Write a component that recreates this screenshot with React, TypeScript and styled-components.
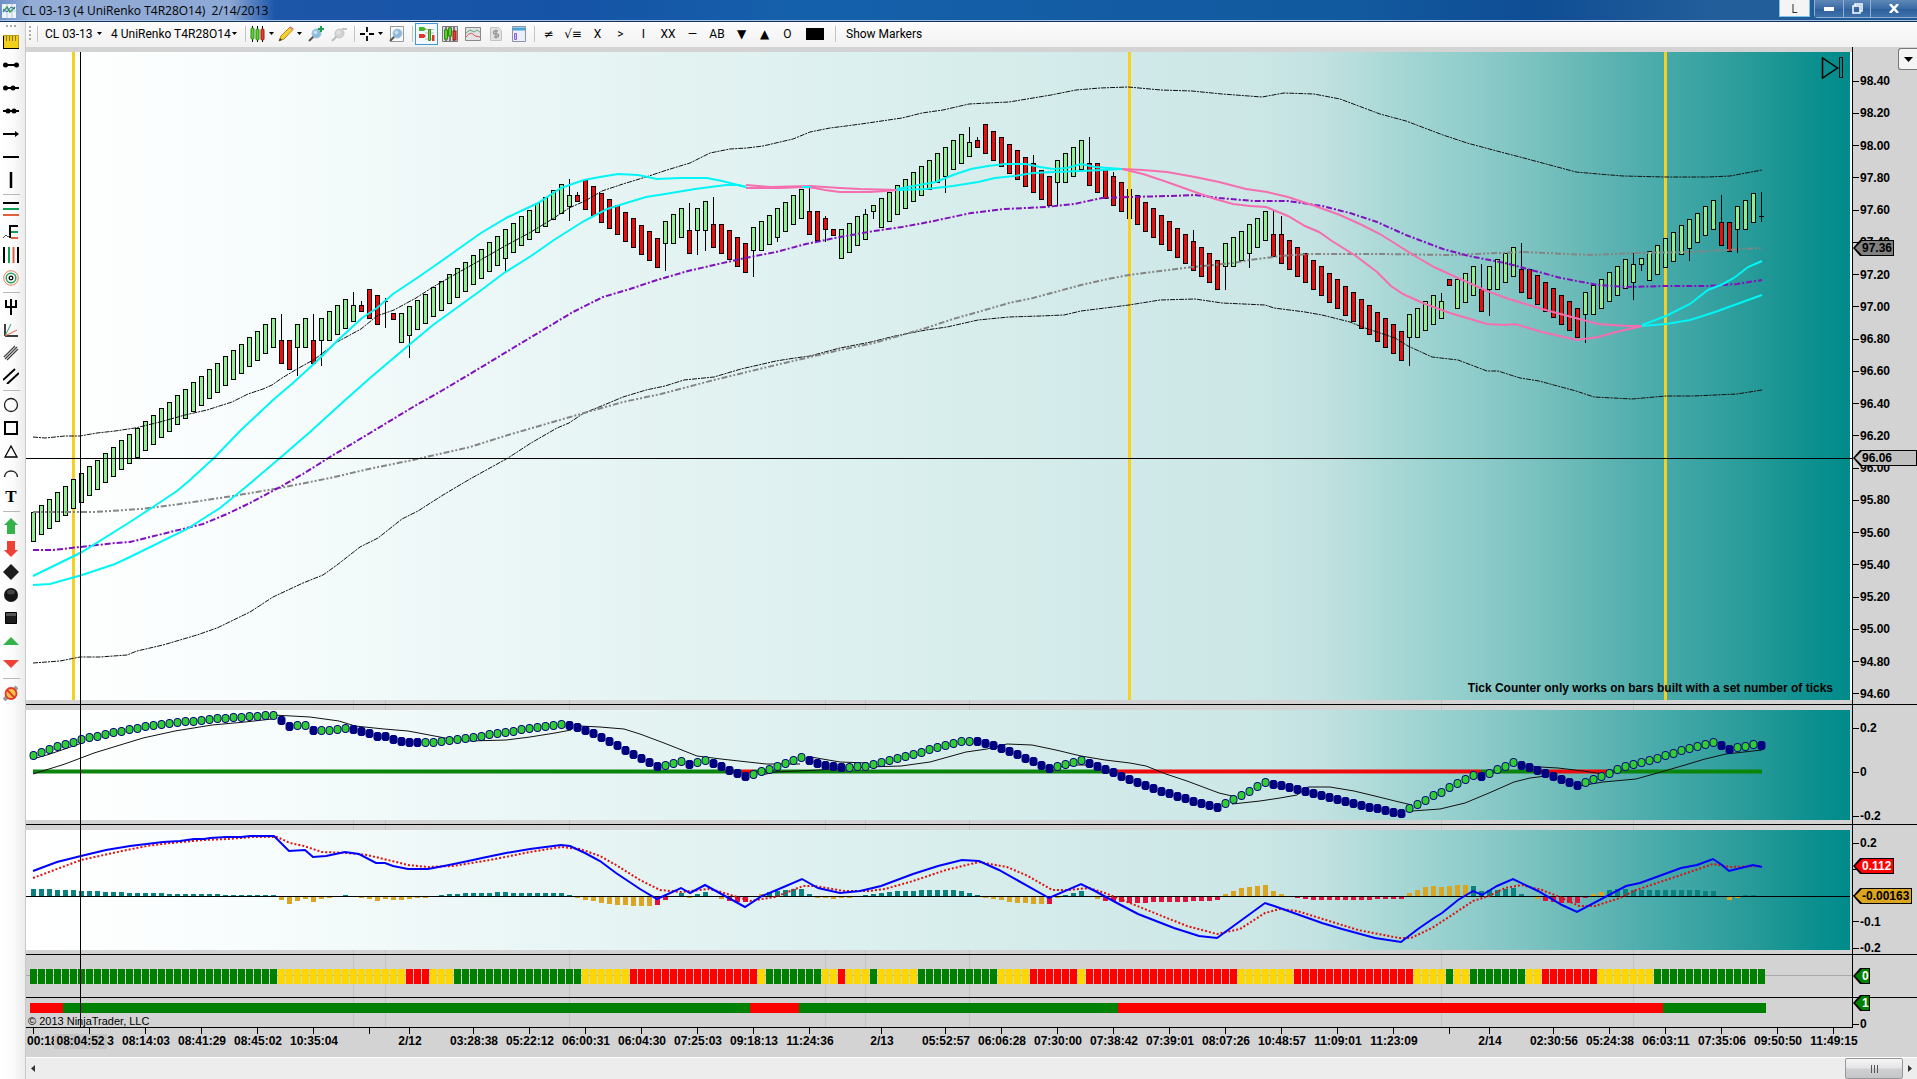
import React from "react";
import styled, { createGlobalStyle } from "styled-components";

/* ------------------------------------------------------------------ */
/* Theme                                                               */
/* ------------------------------------------------------------------ */

const UI_FONT = `"Open Sans", "Noto Sans", sans-serif`;
const TOOLBAR_FONT = `Roboto, "Open Sans", sans-serif`;
const CHART_FONT = `"Liberation Sans", Arial, sans-serif`;
const GREY = "#d3d3d3";
const PLOT_FILL = `linear-gradient(90deg, #ffffff 0%, #fbfefe 8%, #eff8f8 22%, #e5f4f3 33%, #dcf0ef 45%, #d3ebea 57%,
  #cce7e6 67%, #c2e2e1 71%, #aedad8 74%, #96d0ce 78%, #7fc4c2 82%, #62b6b4 86%, #45a9a9 90%, #289b99 94.5%, #0f9190 97.5%, #008b8b 100%)`;

const GlobalStyle = createGlobalStyle`
  *, *::before, *::after { box-sizing: border-box; }
  html, body, #root { height: 100%; margin: 0; }
  body { overflow: hidden; background: ${GREY}; color: #000; font-family: ${UI_FONT}; font-size: 12px; }
  button, select { font: inherit; color: inherit; border: 0; margin: 0; padding: 0; background: none; }
  svg { display: block; }
`;

/* ------------------------------------------------------------------ */
/* Chart data                                                          */
/* ------------------------------------------------------------------ */

const BAR = 8;
const FIRST = 33;
const STEP = 6.46;
const BODY = 29;
const barX = (i: number) => FIRST + i * BAR;

type Candle = { up: boolean; top: number; bottom: number; high?: number; low?: number };
const candles: Candle[] = [];
const u = (top: number, bottom: number, high?: number, low?: number) => candles.push({ up: true, top, bottom, high, low });
const d = (top: number, bottom: number, high?: number, low?: number) => candles.push({ up: false, top, bottom, high, low });
const rise = (n: number, top: number) => {
  for (let k = 0; k < n; k++) u(top - k * STEP, top - k * STEP + BODY);
};
const fall = (n: number, top: number) => {
  for (let k = 0; k < n; k++) d(top + k * STEP, top + k * STEP + BODY);
};

rise(31, 511.5);
d(340, 363, 314);
d(340, 369);
u(324, 347, undefined, 376);
u(318, 347);
d(340, 363, 314);
u(318, 340, undefined, 366);
u(311, 340);
rise(2, 305);
u(305, 321, 292);
d(305, 311, 301);
fall(2, 289);
u(301, 301, 298, 328);
d(313, 319);
u(313, 342);
u(306, 335, undefined, 358);
rise(19, 300.3);
candles[59].low = 271;
u(195, 206, 179, 221);
d(195, 201, 192);
fall(10, 179.6);
u(221, 243, undefined, 271);
u(214, 243);
u(208, 237);
d(230, 253, 203);
u(208, 230, undefined, 255);
u(201, 230, undefined, 251);
d(224, 247, 197);
fall(4, 224);
u(227, 250, undefined, 277);
u(221, 250);
rise(5, 214.5);
candles[93].low = 242;
d(211, 234, 185);
d(211, 240);
d(218, 229, 216, 242);
d(229, 235);
rise(3, 229);
u(214, 239, 209);
u(205, 211, undefined, 219);
rise(11, 198.3);
candles[114].low = 193;
u(142, 156, 127);
d(140, 147, 137);
fall(9, 124.3);
candles[125].high = 155;
u(160, 182, undefined, 206);
u(153, 182);
u(147, 176);
u(140, 169);
d(163, 185, 137);
fall(16, 163);
candles[135].high = 172;
candles[145].high = 230;
u(243, 266, undefined, 290);
rise(5, 237);
candles[152].low = 268;
d(234, 256, 209);
fall(16, 234);
candles[156].high = 216;
u(314, 337, undefined, 366);
u(308, 337);
u(301, 330);
u(295, 324);
u(301, 318, 293);
d(279, 285);
rise(3, 279);
d(289, 311, 264);
u(266, 289, undefined, 316);
u(259, 289);
u(253, 282);
u(247, 276);
d(269, 292, 243);
fall(7, 269);
u(292, 314, undefined, 343);
rise(5, 285.3);
u(264, 282, 253, 300);
u(258, 264, undefined, 271);
rise(9, 251.3);
candles[207].low = 261;
d(222, 245, 195);
d(222, 251);
u(206, 229, undefined, 253);
u(200, 229);
u(193, 222);
u(216, 216, 192, 222);

const upperBand =
  "33,437 45,438 65,436 80,436 97,433 115,431 135,428 160,422 185,415 207,410 232,402 248,394 263,389 272,385 282,378 297,369 315,359 337,342 361,329 377,316 394,310 416,298 433,287 454,275 477,262 505,246 531,232 554,218 569,208 585,201 602,191 623,184 646,177 667,170 690,163 710,153 730,149 747,148 763,146 793,139 810,132 830,128 846,126 861,124 902,118 922,113 943,110 969,104 988,103 1009,102 1051,95 1076,90 1100,88 1128,87 1161,90 1192,91 1222,94 1262,97 1284,93 1314,94 1340,99 1380,114 1406,121 1443,135 1467,143 1493,150 1520,157 1576,172 1598,174 1623,176 1666,177 1708,177 1730,176 1762,170";
const lowerBand =
  "33,663 60,661 80,657 100,657 127,655 137,651 163,645 180,640 197,635 217,628 250,612 273,597 303,583 323,575 337,565 360,547 378,538 402,519 418,511 443,495 470,479 508,458 531,443 557,428 569,423 584,413 604,405 623,397 646,390 665,386 684,380 714,377 741,369 776,361 795,358 810,356 840,348 871,342 895,336 926,330 947,327 978,320 1009,317 1040,316 1064,315 1081,311 1105,308 1129,305 1160,300 1195,299 1222,303 1265,305 1274,308 1305,312 1322,315 1350,322 1362,327 1395,338 1408,346 1432,357 1458,360 1487,371 1498,371 1520,378 1539,381 1576,391 1594,397 1632,399 1666,396 1693,396 1737,394 1762,390";
const purpleLine =
  "33,550 53,550 80,547 115,543 130,542 150,537 203,524 227,514 250,503 280,487 303,474 330,457 370,433 413,407 443,390 480,368 508,351 538,333 573,312 603,297 630,289 657,280 688,271 714,265 745,258 776,252 806,244 840,237 874,231 902,227 929,222 971,213 1005,209 1046,207 1074,204 1102,198 1129,197 1170,196 1195,195 1219,198 1253,201 1288,201 1322,206 1350,213 1377,222 1406,235 1443,249 1469,256 1505,263 1524,268 1561,278 1598,285 1627,287 1666,286 1708,286 1737,284 1762,280";
const greyLine =
  "33,512 95,512 140,509 180,504 233,496 280,488 330,478 373,468 413,460 470,447 508,435 546,424 584,413 623,402 661,394 714,380 776,365 840,350 874,343 902,335 926,328 953,319 978,312 1009,303 1033,298 1081,285 1108,279 1129,275 1160,271 1193,267 1233,263 1250,260 1281,256 1308,254 1380,254 1450,255 1524,252 1590,255 1634,253 1690,252 1727,250 1762,248";

const CYAN = "#00f5f5";
const PINK = "#f56eaf";
const trendLines: { colour: string; points: string }[] = [
  { colour: CYAN, points: "33,576 82,552 130,522 153,507 177,491 190,480 215,457 240,431 273,400 293,383 317,361 337,341 362,318 377,308 393,294 417,278 433,267 457,250 481,233 508,217 538,203 561,188 584,180 600,177 618,174 638,175 657,179 680,178 707,178 722,181 746,187" },
  { colour: CYAN, points: "33,585 50,584 82,575 115,564 130,557 187,529 220,508 247,486 280,458 310,432 343,402 370,378 409,345 433,325 480,291 504,273 531,256 554,240 584,221 607,209 623,204 646,197 665,194 695,189 726,185 738,185 746,187" },
  { colour: PINK, points: "746,185 770,187 810,186 825,187 840,188 860,189 897,190" },
  { colour: PINK, points: "746,188 780,188 803,187 815,188 825,190 840,192 870,192 885,191 897,190" },
  { colour: CYAN, points: "802,187 811,187" },
  { colour: CYAN, points: "897,189 919,185 936,182 953,175 971,169 988,166 1005,164 1026,164 1040,167 1053,169 1067,168 1081,164 1095,167 1122,169" },
  { colour: CYAN, points: "897,190 926,189 953,186 978,182 995,178 1015,176 1033,173 1053,172 1081,171 1102,170 1122,169" },
  { colour: PINK, points: "1122,169 1143,170 1167,172 1195,177 1219,182 1246,189 1267,192 1288,197 1315,206 1340,215 1362,225 1380,234 1399,246 1415,256 1434,267 1458,278 1487,291 1509,299 1542,309 1568,316 1598,324 1627,326 1642,326" },
  { colour: PINK, points: "1122,169 1143,174 1167,182 1195,192 1215,199 1233,204 1250,206 1266,207 1288,216 1305,226 1319,232 1332,241 1356,256 1377,272 1391,286 1403,294 1425,304 1450,313 1487,324 1505,325 1515,324 1542,332 1577,340 1598,337 1616,332 1642,326" },
  { colour: CYAN, points: "1642,325 1666,316 1690,304 1708,290 1723,284 1734,278 1748,267 1762,261" },
  { colour: CYAN, points: "1642,326 1666,324 1690,320 1715,312 1737,304 1762,295" },
];

/* Momentum dots: height of each bar's dot, in thirds of a pixel from the panel's origin. */
const momentum = [
  195, 187, 178, 169, 163, 157, 147, 141, 138, 131, 126, 123, 118, 114, 108, 105, 102, 99, 96, 94, 93, 90, 88, 85, 84, 80, 80, 78, 77, 75, 75,
  90, 108, 105, 104, 120, 120, 120, 118, 114, 117, 123, 129, 137, 138, 147, 153, 155, 156, 156, 156, 153, 150, 147, 144, 142, 138, 133, 130, 126,
  123, 117, 114, 111, 108, 104, 102, 105, 110, 119, 129, 141, 153, 165, 181, 192, 204, 216, 229, 225, 218, 213, 222, 216, 210, 219, 228, 240, 249,
  259, 252, 243, 237, 228, 219, 210, 201, 210, 218, 225, 228, 231, 231, 228, 228, 222, 216, 210, 204, 198, 192, 186, 178, 171, 165, 160, 153, 153,
  154, 159, 165, 174, 183, 192, 204, 213, 226, 234, 228, 222, 216, 210, 219, 228, 237, 246, 258, 267, 276, 285, 294, 303, 309, 318, 323, 333, 339,
  345, 351, 339, 327, 315, 303, 288, 275, 282, 285, 291, 297, 303, 309, 315, 321, 327, 333, 339, 345, 351, 354, 360, 366, 369, 355, 342, 330, 315,
  306, 291, 279, 267, 255, 258, 249, 237, 228, 216, 225, 231, 240, 249, 258, 268, 276, 285, 276, 268, 258, 249, 237, 228, 222, 216, 210, 204, 195,
  189, 180, 174, 168, 162, 156, 165, 177, 171, 168, 162, 165,
];

const momentumCurves = [
  "33,759 50,754 82,743",
  "33,774 65,764 94,753 143,738 175,731 212,725 245,722 272,719",
  "273,715 310,717 339,721 355,726 384,729 408,731 424,734 445,738 470,741 506,740 530,737 555,733 571,730",
  "580,726 600,727 624,729 640,734 664,743 697,756 721,759 766,764 800,764",
  "762,775 775,772 819,770 844,768 868,767 901,766 930,762 966,752 987,749 1007,744 1032,745 1056,750 1081,756 1105,760 1130,763 1146,766 1166,774 1187,781 1203,787 1219,793 1232,796",
  "811,757 840,762 868,763",
  "1050,768 1073,765 1090,765",
  "1232,804 1260,801 1280,798 1297,795 1308,787 1330,787 1354,791 1379,797 1395,801 1412,805",
  "1412,811 1440,809 1465,803 1489,793 1514,782 1530,778 1546,776",
  "1522,766 1558,768 1583,771 1603,774",
  "1579,786 1603,782 1636,779 1661,772 1685,765 1705,759 1726,754 1762,750",
];

const zeroSegments: [number, number, string][] = [
  [33, 742, "#0a840a"],
  [742, 754, "#ee0a0a"],
  [754, 1113, "#0a840a"],
  [1113, 1481, "#ee0a0a"],
  [1481, 1540, "#0a840a"],
  [1540, 1610, "#ee0a0a"],
  [1610, 1762, "#0a840a"],
];

const macdLine =
  "33,871 57,862 81,856 106,850 130,846 163,842 180,841 194,839 204,839 210,838 226,837 241,837 250,836 274,836 289,851 305,850 313,857 326,856 345,852 359,854 376,863 385,863 393,866 408,869 428,869 449,865 473,860 482,858 506,853 530,849 561,845 570,846 585,853 600,861 616,873 640,889 657,899 681,888 690,893 705,885 745,907 762,896 779,889 802,879 818,888 840,893 860,891 881,886 913,874 938,866 962,860 979,861 999,870 1049,898 1081,884 1095,891 1117,903 1138,914 1174,928 1199,936 1217,938 1265,903 1277,907 1322,923 1342,929 1375,938 1401,942 1418,929 1434,918 1442,913 1458,900 1473,891 1482,895 1497,886 1513,879 1538,891 1562,905 1577,912 1626,886 1640,883 1681,868 1697,865 1713,859 1722,865 1729,871 1753,865 1762,867";
const macdSignal =
  "33,878 81,860 122,851 147,846 171,843 204,840 228,839 253,837 277,837 290,843 304,846 322,852 347,853 367,855 388,860 408,865 428,867 453,866 490,860 530,852 561,847 580,849 600,856 616,865 640,880 660,890 681,892 709,889 721,892 750,901 775,897 803,886 815,886 844,891 868,891 885,889 913,881 946,870 979,862 1007,867 1028,876 1052,890 1068,890 1089,888 1105,893 1130,903 1162,916 1187,926 1217,934 1240,929 1265,913 1280,909 1297,911 1326,920 1358,930 1399,938 1411,938 1432,928 1452,915 1473,901 1489,896 1505,888 1522,885 1542,890 1562,898 1579,906 1595,906 1620,898 1636,890 1681,875 1713,864 1730,867 1762,866";

const histogram = [
  7, 7, 7, 6, 6, 6, 5, 5, 5, 4, 4, 4, 3, 3, 3, 3, 3, 2, 2, 2, 2, 2, 2, 2, 1, 1, 1, 1, 1, 1, 1, -3, -7, -4, -2, -5, -2, -1, 0, 1, 0, -1, -2, -4,
  -2, -3, -3, -2, -1, -1, 0, 1, 2, 2, 3, 3, 3, 3, 4, 4, 3, 3, 3, 3, 3, 3, 3, 1, -1, -3, -4, -6, -7, -8, -8, -9, -9, -9, -8, -3, 0, 3, -1, 2, 4,
  0, -2, -4, -5, -5, 0, 2, 4, 5, 6, 7, 7, 2, -1, -1, -2, -1, -1, 0, 1, 2, 3, 4, 5, 5, 5, 6, 6, 6, 6, 6, 5, 3, 1, -1, -2, -3, -5, -6, -6, -7, -7,
  -7, -1, 1, 3, 5, 0, -2, -4, -4, -5, -6, -6, -6, -5, -5, -5, -5, -5, -4, -4, -4, -3, 2, 5, 8, 9, 10, 11, 5, 2, 0, -1, -2, -3, -3, -3, -3, -3, -3,
  -3, -3, -2, -2, -2, -2, 3, 6, 9, 10, 9, 10, 11, 11, 10, 5, 6, 6, 7, 8, 2, 0, -2, -4, -5, -6, -6, -6, -1, 2, 4, 6, 7, 7, 6, 6, 6, 6, 6, 6, 6, 6,
  6, 5, 5, 0, -3, -1, 1, 1, 0,
];
const belowZero = [[78, 79], [87, 91], [127, 127], [134, 179], [189, 196]];

const GREEN = "#008000";
const RED = "#ff0000";
const GOLD = "#ffd700";
const signalRuns: [number, string][] = [
  [31, GREEN], [16, GOLD], [3, RED], [3, GOLD], [16, GREEN], [6, GOLD], [16, RED], [1, GOLD], [7, GREEN], [2, GOLD], [1, RED], [3, GOLD],
  [1, GREEN], [5, GOLD], [10, GREEN], [4, GOLD], [6, RED], [1, GOLD], [19, RED], [7, GOLD], [15, RED], [4, GOLD], [1, GREEN], [2, GOLD],
  [7, GREEN], [2, GOLD], [7, RED], [7, GOLD], [14, GREEN],
];
const signalBlocks = signalRuns.flatMap(([n, colour]) => Array<string>(n).fill(colour));

const trendRuns: [number, number, string][] = [
  [30, 63, RED],
  [63, 750, GREEN],
  [750, 799, RED],
  [799, 1118, GREEN],
  [1118, 1663, RED],
  [1663, 1766, GREEN],
];

const sessionLines = [353, 385, 569, 825, 865, 969, 1441, 1633];
const dayMarkers = [72, 1664];

const priceLabels = Array.from({ length: 20 }, (_, k) => (98.4 - k * 0.2).toFixed(2));

/* Each tick: number of bars to the next one, and its label. */
const timeTicks: [number, string][] = [
  [7, "00:18:24"], [7, "08:10:43"], [7, "08:14:03"], [7, "08:41:29"], [7, "08:45:02"], [7, "10:35:04"], [5, ""], [8, "2/12"],
  [7, "03:28:38"], [7, "05:22:12"], [7, "06:00:31"], [7, "06:04:30"], [7, "07:25:03"], [7, "09:18:13"], [9, "11:24:36"], [8, "2/13"],
  [7, "05:52:57"], [7, "06:06:28"], [7, "07:30:00"], [7, "07:38:42"], [7, "07:39:01"], [7, "08:07:26"], [7, "10:48:57"], [7, "11:09:01"],
  [7, "11:23:09"], [5, ""], [8, "2/14"], [7, "02:30:56"], [7, "05:24:38"], [7, "06:03:11"], [7, "07:35:06"], [7, "09:50:50"], [0, "11:49:15"],
];

/* ------------------------------------------------------------------ */
/* Window frame                                                        */
/* ------------------------------------------------------------------ */

const Window = styled.div`
  display: flex;
  flex-direction: column;
  height: 100vh;
`;

const TitleBar = styled.header`
  display: flex;
  align-items: flex-start;
  flex: 0 0 22px;
  border-bottom: 1px solid #16305c;
  box-shadow: inset 0 -1px #a9c3e4;
  background: linear-gradient(90deg, #6d90c8 0, #94add6 30px, #8ca8d4 230px, #1c56a9 275px, #1553a6 560px, #1560ab 800px, #125a9f 70%, #0f4d94 80%, #235f9b 90%, #1f5a98 100%);
`;

const TitleText = styled.h1`
  display: flex;
  align-items: center;
  gap: 6px;
  flex: 1;
  height: 21px;
  margin: 0;
  padding-left: 2px;
  font-size: 12px;
  font-weight: 400;
  white-space: pre;
`;

const LinkButton = styled.button`
  width: 31px;
  height: 17px;
  margin-right: 4px;
  border: 1px solid #7fc4e8;
  border-top: 0;
  background: #f4f4f4;
  color: #333;
`;

const Caption = styled.div`
  display: flex;
  height: 18px;
  border: 1px solid #8fb0d2;
  border-width: 0 0 1px 1px;
  border-radius: 0 0 0 4px;
`;

const CaptionButton = styled.button<{ $w: number }>`
  display: grid;
  place-items: center;
  width: ${(p) => p.$w}px;
  background: linear-gradient(#5f88b8, #3a6ba4 50%, #2d5f9c 51%, #3f72aa);
  & + & {
    border-left: 1px solid #8fb0d2;
  }
`;

const Body = styled.div`
  display: flex;
  flex: 1;
  min-height: 0;
`;

/* ------------------------------------------------------------------ */
/* Drawing tools                                                       */
/* ------------------------------------------------------------------ */

const Rail = styled.nav`
  display: flex;
  flex-direction: column;
  align-items: center;
  flex: 0 0 26px;
  padding-right: 3px;
  border-right: 1px solid #c9c9c9;
  background: linear-gradient(90deg, #fff 0, #fbfbfb 50%, #ececec 100%);
`;

const RailGrip = styled.span`
  width: 12px;
  height: 8px;
  background: radial-gradient(circle, #aaa 1px, transparent 1px) 0 2px / 4px 4px repeat-x;
`;

const RailButton = styled.button`
  display: grid;
  place-items: center;
  flex: 0 0 23px;
  width: 22px;
`;

const RailRule = styled.hr`
  width: 17px;
  height: 1px;
  margin: 3px 0 2px;
  border: 0;
  background: #b8b8b8;
`;

/* ------------------------------------------------------------------ */
/* Toolbar                                                             */
/* ------------------------------------------------------------------ */

const Main = styled.main`
  display: flex;
  flex-direction: column;
  flex: 1;
  min-width: 0;
`;

const Toolbar = styled.div`
  display: flex;
  align-items: center;
  flex: 0 0 25px;
  padding: 0 0 2px 2px;
  background: linear-gradient(#fdfdfd, #f1f1f1);
  font-family: ${TOOLBAR_FONT};
`;

const Grip = styled.span`
  width: 3px;
  height: 17px;
  margin-right: 2px;
  background: radial-gradient(circle, #aaa 1px, transparent 1px) 0 0 / 4px 4px repeat-y;
`;

const Divider = styled.span`
  width: 1px;
  height: 16px;
  margin: 0 2px 0 4px;
  background: #c4c4c4;
`;

const Picker = styled.label<{ $w: number }>`
  display: flex;
  align-items: center;
  width: ${(p) => p.$w}px;
  padding: 0 4px 0 5px;
`;

const PickerSelect = styled.select`
  flex: 1;
  min-width: 0;
  appearance: none;
  white-space: nowrap;
`;

const ToolButton = styled.button<{ $w?: number; $active?: boolean; $shape?: boolean }>`
  display: flex;
  align-items: center;
  justify-content: center;
  gap: 3px;
  width: ${(p) => p.$w ?? 23}px;
  height: 22px;
  white-space: nowrap;
  font-family: ${(p) => (p.$shape ? `"DejaVu Sans", sans-serif` : "inherit")};
  box-shadow: ${(p) => (p.$active ? "inset 0 0 0 1px #3f97d8" : "none")};
  background: ${(p) => (p.$active ? "#f3f8fc" : "none")};
`;

const Swatch = styled.span`
  width: 18px;
  height: 12px;
  background: #000;
`;

const MarkersButton = styled.button`
  height: 22px;
  padding: 0 8px;
`;

/* ------------------------------------------------------------------ */
/* Chart                                                               */
/* ------------------------------------------------------------------ */

const ChartArea = styled.section`
  position: relative;
  display: flex;
  flex-direction: column;
  flex: 1;
  min-height: 0;
  background: ${GREY};
  font-family: ${CHART_FONT};
  font-weight: 700;
  line-height: 12px;
`;

const SessionGrid = styled.svg`
  position: absolute;
  inset: 0;
  width: 100%;
  height: 100%;
`;

const Panel = styled.div<{ $h?: number; $rule?: boolean }>`
  position: relative;
  display: flex;
  flex: ${(p) => (p.$h ? `0 0 ${p.$h}px` : "1 1 0")};
  min-height: 0;
  border-bottom: ${(p) => (p.$rule === false ? 0 : 1)}px solid #000;
`;

const PlotBox = styled.div<{ $edge?: string }>`
  position: relative;
  flex: 1;
  min-width: 0;
  margin: 5px 0 4px;
  border-right: 2px solid ${(p) => p.$edge ?? GREY};
  background: ${PLOT_FILL};
`;

const StripBox = styled.div`
  position: relative;
  flex: 1;
  min-width: 0;
`;

const Plot = styled.svg`
  width: 100%;
  height: 100%;
`;

const Axis = styled.div<{ $top?: number; $bottom?: number }>`
  position: relative;
  display: flex;
  flex-direction: column;
  justify-content: space-between;
  flex: 0 0 65px;
  padding: ${(p) => p.$top ?? 0}px 0 ${(p) => p.$bottom ?? 0}px;
  border-left: 1px solid #000;
`;

const AxisLabel = styled.span`
  display: flex;
  align-items: center;
  gap: 1px;
  min-height: 12px;
  &::before {
    content: "";
    width: 6px;
    height: 1px;
    background: #000;
  }
`;

const Tag = styled.span<{ $y: number; $w: number; $fill: string; $ink?: string }>`
  position: absolute;
  top: ${(p) => p.$y}px;
  left: 0;
  width: ${(p) => p.$w}px;
  height: 16px;
  padding-left: 9px;
  line-height: 16px;
  color: ${(p) => p.$ink ?? "#000"};
  isolation: isolate;
  &::before,
  &::after {
    content: "";
    position: absolute;
    z-index: -2;
    inset: 0;
    background: #000;
    clip-path: polygon(0 50%, 7px 0, 100% 0, 100% 100%, 7px 100%);
  }
  &::after {
    z-index: -1;
    inset: 1px 1px 1px 2px;
    background: ${(p) => p.$fill};
  }
`;

const CrosshairX = styled.i`
  position: absolute;
  left: 54px;
  top: 5px;
  bottom: 30px;
  width: 1px;
  background: #000;
`;

const CrosshairY = styled.i`
  position: absolute;
  left: 0;
  right: 64px;
  top: 411px;
  height: 1px;
  background: #000;
`;

const Notice = styled.p`
  position: absolute;
  right: 17px;
  bottom: 6px;
  margin: 0;
`;

const LastBarButton = styled.button`
  position: absolute;
  top: 5px;
  right: 6px;
`;

const AxisMenu = styled.button`
  position: absolute;
  top: 1px;
  right: 0;
  display: grid;
  place-items: center;
  width: 19px;
  height: 22px;
  border: 1px solid #777;
  border-right: 0;
  border-radius: 3px 0 0 3px;
  background: #f5f5f5;
`;

const Copyright = styled.small`
  position: absolute;
  left: 2px;
  bottom: 0;
  font-size: 11px;
  font-weight: 400;
`;

const TimeAxis = styled.div`
  position: relative;
  display: flex;
  flex: 0 0 30px;
  margin-right: 64px;
  padding-left: 7px;
  border-top: 1px solid #000;
`;

const TimeTick = styled.span<{ $bars: number }>`
  display: flex;
  flex: 0 0 ${(p) => p.$bars * BAR}px;
  width: 0;
  height: 6px;
  border-left: 1px solid #000;
`;

const TimeLabel = styled.span<{ $start?: boolean }>`
  display: flex;
  justify-content: ${(p) => (p.$start ? "flex-start" : "center")};
  flex: 0 0 0;
  width: 0;
  margin-left: ${(p) => (p.$start ? -7 : 0)}px;
  padding-top: 7px;
  white-space: nowrap;
`;

const CursorTime = styled.output`
  position: absolute;
  left: 28px;
  top: 6px;
  width: 53px;
  height: 15px;
  line-height: 15px;
  text-align: center;
  background: #c3c3c3;
`;

const ScrollTrack = styled.div`
  display: flex;
  align-items: center;
  justify-content: space-between;
  flex: 0 0 22px;
  border-top: 1px solid #fff;
  background: #ededed;
`;

const ScrollEnd = styled.div`
  display: flex;
  align-items: center;
  align-self: stretch;
`;

const ScrollArrow = styled.button`
  display: grid;
  place-items: center;
  width: 14px;
  height: 20px;
`;

const ScrollThumb = styled.button`
  display: grid;
  place-items: center;
  width: 58px;
  height: 21px;
  border: 1px solid #979797;
  border-radius: 2px;
  background: linear-gradient(#f5f5f5, #e4e4e6 48%, #cfd0d2 52%, #c5c6c9);
`;

/* ------------------------------------------------------------------ */
/* Icons                                                               */
/* ------------------------------------------------------------------ */

const Caret = () => (
  <svg width="5" height="3" viewBox="0 0 5 3"><path d="M0 0h5L2.5 3z" /></svg>
);

const Svg16 = ({ children }: { children: React.ReactNode }) => (
  <svg width="16" height="16" viewBox="0 0 16 16" fill="none" stroke="#000">{children}</svg>
);

const Ring = ({ blue }: { blue?: boolean }) => (
  <>
    <path d="M1 15l5-5" stroke={blue ? "#555" : "#bbb"} strokeWidth="2" />
    <circle cx="8.5" cy="7.500" r="4.500" fill={blue ? "#8db9da" : "#d2d2d2"} stroke={blue ? "#a8c4da" : "#c6c6c6"} />
    <circle cx="7.500" cy="6.500" r="2" fill={blue ? "#c6e0f2" : "#e2e2e2"} stroke="none" />
  </>
);

const icons: Record<string, React.ReactNode> = {
  ruler: <><path d="M.5 1.500h15v13H.5z" fill="#f2cf1d" stroke="#b89a10" /><path d="M3.500 2v5M6.500 2v5M9.500 2v5M12.500 2v5" stroke="#8d7508" /><path d="M0 14.500h16M.5 2v13" /></>,
  segment: <><path d="M2 8h12" strokeWidth="2" /><circle cx="2.500" cy="8" r="2.500" fill="#000" stroke="none" /><circle cx="13.500" cy="8" r="2.500" fill="#000" stroke="none" /></>,
  ray: <><path d="M2 8h14" strokeWidth="2" /><circle cx="2.500" cy="8" r="2.500" fill="#000" stroke="none" /><circle cx="10" cy="8" r="2.500" fill="#000" stroke="none" /></>,
  extended: <><path d="M0 8h16" strokeWidth="2" /><circle cx="5" cy="8" r="2.500" fill="#000" stroke="none" /><circle cx="11" cy="8" r="2.500" fill="#000" stroke="none" /></>,
  arrow: <><path d="M0 8h14" strokeWidth="2" /><path d="M12 5l4 3-4 3z" fill="#000" stroke="none" /></>,
  hline: <path d="M0 8h16" strokeWidth="2" />,
  vline: <path d="M8 0v16" strokeWidth="2.500" />,
  fibRet: <><path d="M0 2h16" strokeWidth="2" /><path d="M0 8h16" stroke="#0f9d58" strokeWidth="2" /><path d="M0 14h16" stroke="#e2603e" strokeWidth="2" /></>,
  fibExt: <><path d="M15 2H7v12" strokeWidth="2" /><path d="M8 8h7" stroke="#0f9d58" strokeWidth="2" /><path d="M8 14h7" stroke="#e2603e" strokeWidth="2" /><path d="M0 14l3-3 2 2 2-2" stroke="#555" /></>,
  fibTime: <><path d="M1 0v16M15 0v16" strokeWidth="2" /><path d="M6 0v16" stroke="#0f9d58" strokeWidth="2" /><path d="M10.500 0v16" stroke="#e2603e" strokeWidth="2" /></>,
  fibCircle: <><circle cx="8" cy="8" r="7.300" stroke="#e2805e" /><circle cx="8" cy="8" r="4.800" stroke="#2fa060" strokeWidth="1.500" /><circle cx="8" cy="8" r="1.800" strokeWidth="1.300" /></>,
  pitchfork: <path d="M3 1v7h10V1M8 0v16" strokeWidth="2" />,
  gann: <><path d="M2 2v12M2 14h13" strokeWidth="1.500" /><path d="M2 14L8 2" stroke="#2fa060" /><path d="M2 14L14 8" stroke="#e2603e" /></>,
  regression: <path d="M1 12L12 1M2 14L14 2M4 15L15 4" stroke="#444" strokeWidth="1.300" />,
  channel: <path d="M0 12L12 1M4 16L16 5" strokeWidth="2" />,
  ellipse: <circle cx="8" cy="8" r="6.500" stroke="#222" strokeWidth="1.300" />,
  rectangle: <path d="M2 2h12v12H2z" strokeWidth="2" />,
  triangle: <path d="M8 3l6 11H2z" strokeWidth="1.300" />,
  arc: <path d="M1.500 11C2 3 14 3 14.500 11" stroke="#222" strokeWidth="1.500" />,
  arrowUp: <path d="M8 0l7 7h-3v9H4V7H1z" fill="#35b24a" stroke="none" />,
  arrowDown: <path d="M8 16l7-7h-3V0H4v9H1z" fill="#ee4035" stroke="none" />,
  diamond: <path d="M8 0l8 8-8 8-8-8z" fill="#1c1c1c" stroke="none" />,
  dot: <><circle cx="8" cy="8" r="7" fill="#151515" stroke="none" /><ellipse cx="8" cy="5" rx="4" ry="2.500" fill="#444" stroke="none" /></>,
  square: <><path d="M2.500 2.500h11v11h-11z" fill="#1c1c1c" /><path d="M3 3h10v3H3z" fill="#555" stroke="none" /></>,
  triUp: <path d="M8 4l8 8H0z" fill="#35b24a" stroke="none" />,
  triDown: <path d="M8 12l8-8H0z" fill="#ee4035" stroke="none" />,
  erase: <><path d="M1 15l13-13" stroke="#999" strokeWidth="4" /><circle cx="8" cy="8.500" r="5.500" fill="#fdc04d" stroke="#e03a28" strokeWidth="1.800" /><path d="M4 5l8 8" stroke="#e03a28" strokeWidth="1.800" /></>,
  candles: <><path d="M2.500 0v16M7.500 0v16M12.500 0v16" /><rect x="1" y="2" width="3" height="11" rx="1" fill="#5fd02e" stroke="#2f8a17" /><rect x="6" y="3" width="3" height="11" rx="1" fill="#5fd02e" stroke="#2f8a17" /><rect x="11" y="3" width="3" height="11" rx="1" fill="#e04030" stroke="#9a1c14" /></>,
  pencil: <><path d="M1 15l2-5L12 1l3 2.500L6 13z" fill="#f6d030" stroke="#b98a1a" /><path d="M1 15l1-3 2 2z" fill="#333" stroke="none" /><path d="M12 1l3 2.500" stroke="#d98080" strokeWidth="2" /></>,
  zoomIn: <><Ring blue /><path d="M13 0v6M10 3h6" stroke="#18a050" strokeWidth="2" /></>,
  zoomOut: <><Ring /><path d="M11 3h5" stroke="#c4c4c4" strokeWidth="2" /></>,
  cross: <path d="M8 1v5M8 10v5M1 8h5M10 8h5" strokeWidth="1.800" />,
  inspect: <><path d="M1.500.5h13v15h-13z" fill="#fafafa" stroke="#999" /><Ring blue /></>,
  trader: <><path d="M6 3.500h9M6 7h9M6 13h9" stroke="#b9b9b9" /><path d="M0 1h5l2 2-2 2H0z" fill="#45b52d" stroke="none" /><path d="M0 8h5l2 2-2 2H0z" fill="#d8382e" stroke="none" /><path d="M9.500 3.500h2v11h-2z" fill="#67c63a" stroke="#3f8f22" /><path d="M13 9h2.500v6H13z" fill="#d8382e" stroke="none" /></>,
  dataBox: <><path d="M.5.500h15v15H.5z" fill="#ddd" stroke="#777" /><path d="M4 1v14M8 1v14M12 1v14" stroke="#111" /><rect x="2.500" y="4" width="3" height="9" fill="#5fd02e" stroke="#2f8a17" /><rect x="6.500" y="2" width="3" height="8" fill="#5fd02e" stroke="#2f8a17" /><rect x="11" y="5" width="3" height="9" fill="#e04030" stroke="#9a1c14" /></>,
  indicators: <><path d="M.5 1.500h15v13H.5z" fill="#e2e2e2" stroke="#888" /><path d="M1 7l4-3 4 2 3-2 4 3" stroke="#5aa77a" /><path d="M1 11c4-5 6-4 8-2s4 1 6 2" stroke="#d05050" /></>,
  strategy: <><path d="M2.500 1.500h8l3 3v10h-11z" fill="#e2e2e2" stroke="#c2c2c2" /><path d="M10 5H7a1.500 1.500 0 000 3h2a1.500 1.500 0 010 3H6M8 3.500v9" stroke="#999" strokeWidth="1.500" /></>,
  properties: <><path d="M1.500.500h13v15h-13z" fill="#eaf0fa" stroke="#8a93a8" /><path d="M2 3h12" stroke="#4aa3d8" strokeWidth="3" /><path d="M3.500 7.500h2v6h-2z" stroke="#8e62d8" fill="#cdb9f2" /></>,
};

const Icon = ({ name }: { name: string }) => <Svg16>{icons[name]}</Svg16>;

const railGroups = [
  ["ruler", "segment", "ray", "extended", "arrow", "hline", "vline"],
  ["fibRet", "fibExt", "fibTime", "fibCircle"],
  ["pitchfork", "gann", "regression", "channel"],
  ["ellipse", "rectangle", "triangle", "arc", "text"],
  ["arrowUp", "arrowDown", "diamond", "dot", "square", "triUp", "triDown"],
  ["erase"],
];

const TextTool = styled.span`
  font: 700 17px/18px "Liberation Serif", serif;
`;

const drawingShortcuts: [string, number][] = [
  ["≠", 23], ["√≡", 26], ["X", 23], [">", 23], ["I", 23], ["XX", 26], ["—", 23], ["AB", 26], ["▼", 23], ["▲", 23], ["O", 23],
];

/* ------------------------------------------------------------------ */
/* Parts                                                               */
/* ------------------------------------------------------------------ */

const CandleShape = ({ c, i }: { c: Candle; i: number }) => {
  const x = barX(i);
  const top = Math.round(c.top);
  const bottom = Math.round(c.bottom);
  return (
    <g stroke="#000" shapeRendering="crispEdges">
      {c.high !== undefined && <path d={`M${x + 0.5} ${c.high}V${top}`} />}
      {c.low !== undefined && <path d={`M${x + 0.5} ${bottom}V${c.low}`} />}
      {top === bottom ? (
        <path d={`M${x - 2} ${top + 0.5}h5`} />
      ) : (
        <rect x={x - 1.5} y={top + 0.5} width="4" height={bottom - top} fill={c.up ? "#90ee90" : "#ee0c0c"} />
      )}
    </g>
  );
};

const PricePlot = () => (
  <Plot role="img" aria-label="Price chart">
    <g transform="translate(-26 -52)" fill="none">
      {dayMarkers.map((x) => (
        <path key={x} d={`M${x + 1.5} 52V1400`} stroke="#f5d020" strokeWidth="3" />
      ))}
      {candles.map((c, i) => (
        <CandleShape key={i} c={c} i={i} />
      ))}
      <path d="M1129.500 52V1400" stroke="#f8d020" strokeWidth="3" />
      <g stroke="#111" strokeDasharray="5 1 2 1">
        <polyline points={upperBand} />
        <polyline points={lowerBand} />
      </g>
      <polyline points={greyLine} stroke="#858585" strokeWidth="2" strokeDasharray="6 2 2 2 2 2" />
      <polyline points={purpleLine} stroke="#8010c0" strokeWidth="2" strokeDasharray="6 2 2 2" />
      {trendLines.map((line, k) => (
        <polyline key={k} points={line.points} stroke={line.colour} strokeWidth="2" />
      ))}
    </g>
  </Plot>
);

const MomentumPlot = () => (
  <Plot role="img" aria-label="Momentum">
    <g transform="translate(-26 -710)" fill="none">
      {zeroSegments.map(([from, to, colour]) => (
        <path key={from} d={`M${from} 771.500H${to}`} stroke={colour} strokeWidth="4" />
      ))}
      {momentumCurves.map((points) => (
        <polyline key={points} points={points} stroke="#111" />
      ))}
      {momentum.map((v, i) => {
        const falling = i > 0 && v > momentum[i - 1];
        return (
          <rect
            key={i}
            x={barX(i) - 3}
            y={Math.round(690 + v / 3) - 3.5}
            width="7"
            height="8"
            rx={falling ? 2 : 3}
            fill={falling ? "#000080" : "#32cd32"}
            stroke="#000080"
          />
        );
      })}
    </g>
  </Plot>
);

const barColour = (v: number, i: number) => {
  const below = belowZero.some(([a, b]) => i >= a && i <= b);
  if (v > 0) return below ? "#daa520" : "#0b8280";
  return below ? "#dc143c" : "#daa520";
};

const MacdPlot = () => (
  <Plot role="img" aria-label="MACD">
    <g transform="translate(-26 -830)" fill="none">
      {histogram.map((v, i) => (
        <rect key={i} x={barX(i) - 2} y={v > 0 ? 896 - v : 897} width="5" height={Math.abs(v)} fill={barColour(v, i)} />
      ))}
      <path d="M26 896.500H4000" stroke="#000" />
      <polyline points={macdSignal} stroke="#e01010" strokeWidth="2" strokeDasharray="2 2" />
      <polyline points={macdLine} stroke="#0000ff" strokeWidth="2" />
    </g>
  </Plot>
);

const SignalStrip = () => (
  <Plot role="img" aria-label="Bar signals">
    <g transform="translate(-26 -955)">
      <path d="M26 975.500H4000" stroke="#a8a8a8" />
      {signalBlocks.map((colour, i) => (
        <rect key={i} x={barX(i) - 3} y="969" width="7" height="15" fill={colour} />
      ))}
    </g>
  </Plot>
);

const TrendStrip = () => (
  <Plot role="img" aria-label="Trend state">
    <g transform="translate(-26 -998)">
      {trendRuns.map(([from, to, colour]) => (
        <rect key={from} x={from} y="1003" width={to - from} height="10" fill={colour} />
      ))}
    </g>
  </Plot>
);

/* ------------------------------------------------------------------ */
/* App                                                                 */
/* ------------------------------------------------------------------ */

export default function App() {
  return (
    <Window>
      <GlobalStyle />
      <TitleBar>
        <TitleText>
          <svg width="14" height="14" viewBox="0 0 14 14" fill="none">
            <path d="M0 0h14v14H0z" fill="#eef3f8" />
            <path d="M0 7h14M5 0v14M10 0v14" stroke="#b9c7e0" />
            <path d="M1 8l4-5 3 5 5-5" stroke="#3aa05a" strokeWidth="1.500" />
            <path d="M1 5l4 3 4-5 4 2" stroke="#3b62b8" />
          </svg>
          {"CL 03-13 (4 UniRenko T4R28O14)  2/14/2013"}
        </TitleText>
        <LinkButton>L</LinkButton>
        <Caption>
          <CaptionButton $w={28} aria-label="Minimize">
            <svg width="10" height="4"><path d="M0 0h10v4H0z" fill="#fff" /></svg>
          </CaptionButton>
          <CaptionButton $w={27} aria-label="Restore">
            <svg width="11" height="11" viewBox="0 0 11 11" fill="none" stroke="#fff" strokeWidth="1.500"><path d="M3 3V1h7v7H8M1 3h7v7H1z" /></svg>
          </CaptionButton>
          <CaptionButton $w={47} aria-label="Close">
            <svg width="10" height="9" viewBox="0 0 10 9" stroke="#fff" strokeWidth="2.500"><path d="M1 0l8 9M9 0L1 9" /></svg>
          </CaptionButton>
        </Caption>
      </TitleBar>

      <Body>
        <Rail aria-label="Drawing tools">
          <RailGrip />
          {railGroups.map((group, g) => (
            <React.Fragment key={g}>
              {g > 0 && <RailRule />}
              {group.map((name) => (
                <RailButton key={name} aria-label={name}>
                  {name === "text" ? <TextTool>T</TextTool> : <Icon name={name} />}
                </RailButton>
              ))}
            </React.Fragment>
          ))}
        </Rail>

        <Main>
          <Toolbar>
            <Grip />
            <Divider />
            <Picker $w={66}>
              <PickerSelect aria-label="Instrument"><option>CL 03-13</option></PickerSelect>
              <Caret />
            </Picker>
            <Picker $w={135}>
              <PickerSelect aria-label="Interval"><option>4 UniRenko T4R28O14</option></PickerSelect>
              <Caret />
            </Picker>
            <Divider />
            <ToolButton $w={28} aria-label="Chart style"><Icon name="candles" /><Caret /></ToolButton>
            <ToolButton $w={28} aria-label="Draw"><Icon name="pencil" /><Caret /></ToolButton>
            <ToolButton aria-label="Zoom in"><Icon name="zoomIn" /></ToolButton>
            <ToolButton aria-label="Zoom out"><Icon name="zoomOut" /></ToolButton>
            <Divider />
            <ToolButton $w={28} aria-label="Crosshair"><Icon name="cross" /><Caret /></ToolButton>
            <ToolButton aria-label="Show data box"><Icon name="inspect" /></ToolButton>
            <Divider />
            <ToolButton $active aria-label="Chart trader"><Icon name="trader" /></ToolButton>
            <ToolButton aria-label="Data series"><Icon name="dataBox" /></ToolButton>
            <ToolButton aria-label="Indicators"><Icon name="indicators" /></ToolButton>
            <ToolButton aria-label="Strategies"><Icon name="strategy" /></ToolButton>
            <ToolButton aria-label="Properties"><Icon name="properties" /></ToolButton>
            <Divider />
            {drawingShortcuts.map(([label, w]) => (
              <ToolButton key={label} $w={w} $shape={"≠√≡▼▲".includes(label)}>{label}</ToolButton>
            ))}
            <ToolButton $w={32} aria-label="Colour"><Swatch /></ToolButton>
            <Divider />
            <MarkersButton>Show Markers</MarkersButton>
          </Toolbar>

          <ChartArea>
            <SessionGrid>
              {sessionLines.map((x) => (
                <path key={x} d={`M${x - 25.5} 600V980`} stroke="#c2c2c2" />
              ))}
            </SessionGrid>

            <Panel>
              <PlotBox $edge="#fff">
                <PricePlot />
                <Notice>Tick Counter only works on bars built with a set number of ticks</Notice>
                <LastBarButton aria-label="Go to last bar">
                  <svg width="23" height="22" viewBox="0 0 23 22" fill="none" stroke="#000">
                    <path d="M1.500 1v20L16.500 11z" strokeWidth="1.500" />
                    <path d="M18.500 .500h3v20h-3z" />
                  </svg>
                </LastBarButton>
              </PlotBox>
              <Axis $top={28} $bottom={4}>
                {priceLabels.map((p) => <AxisLabel key={p}>{p}</AxisLabel>)}
                <Tag $y={193} $w={41} $fill="#808080">97.36</Tag>
                <Tag $y={403} $w={64} $fill="#c0c0c0">96.06</Tag>
                <AxisMenu aria-label="Axis options">
                  <svg width="9" height="5"><path d="M0 0h9L4.500 5z" /></svg>
                </AxisMenu>
              </Axis>
            </Panel>

            <Panel $h={120}>
              <PlotBox><MomentumPlot /></PlotBox>
              <Axis $top={17} $bottom={2}>
                <AxisLabel>0.2</AxisLabel>
                <AxisLabel>0</AxisLabel>
                <AxisLabel>-0.2</AxisLabel>
              </Axis>
            </Panel>

            <Panel $h={130}>
              <PlotBox><MacdPlot /></PlotBox>
              <Axis $top={12}>
                <AxisLabel>0.2</AxisLabel>
                <AxisLabel>0.1</AxisLabel>
                <AxisLabel />
                <AxisLabel>-0.1</AxisLabel>
                <AxisLabel>-0.2</AxisLabel>
                <Tag $y={33} $w={41} $fill="#ff0000" $ink="#fff">0.112</Tag>
                <Tag $y={63} $w={59} $fill="#daa520">-0.00163</Tag>
              </Axis>
            </Panel>

            <Panel $h={43}>
              <StripBox><SignalStrip /></StripBox>
              <Axis><Tag $y={13} $w={17} $fill="#008000" $ink="#fff">0</Tag></Axis>
            </Panel>

            <Panel $h={29} $rule={false}>
              <StripBox>
                <TrendStrip />
                <Copyright>© 2013 NinjaTrader, LLC</Copyright>
              </StripBox>
              <Axis $top={20}>
                <AxisLabel>0</AxisLabel>
                <Tag $y={-3} $w={17} $fill="#008000" $ink="#fff">1</Tag>
              </Axis>
            </Panel>

            <TimeAxis>
              {timeTicks.map(([bars, label], k) => (
                <TimeTick key={k} $bars={bars}>
                  <TimeLabel $start={k === 0}>{label}</TimeLabel>
                </TimeTick>
              ))}
              <CursorTime>08:04:52</CursorTime>
            </TimeAxis>

            <CrosshairX />
            <CrosshairY />
          </ChartArea>

          <ScrollTrack>
            <ScrollArrow aria-label="Scroll left">
              <svg width="4" height="7"><path d="M4 0v7L0 3.500z" fill="#333" /></svg>
            </ScrollArrow>
            <ScrollEnd>
              <ScrollThumb aria-label="Scroll position">
                <svg width="9" height="8"><path d="M1.500 0v8M4.500 0v8M7.500 0v8" stroke="#555" /></svg>
              </ScrollThumb>
              <ScrollArrow aria-label="Scroll right">
                <svg width="4" height="7"><path d="M0 0v7L4 3.500z" fill="#333" /></svg>
              </ScrollArrow>
            </ScrollEnd>
          </ScrollTrack>
        </Main>
      </Body>
    </Window>
  );
}
